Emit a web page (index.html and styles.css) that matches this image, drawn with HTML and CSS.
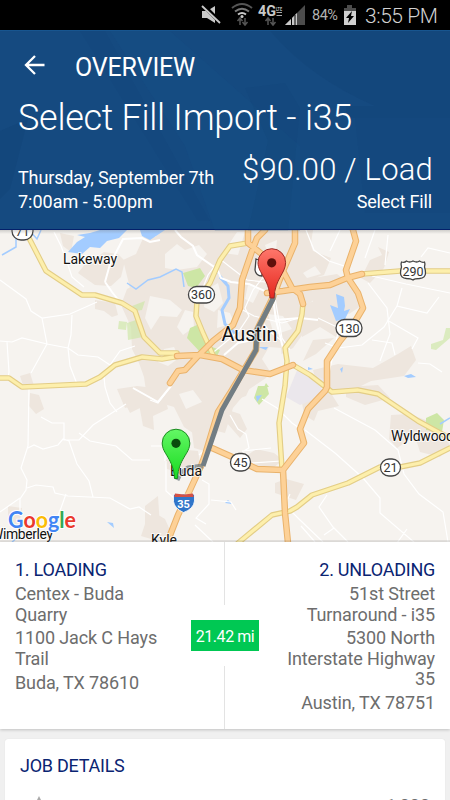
FILE: index.html
```html
<!DOCTYPE html>
<html lang="en">
<head>
<meta charset="utf-8">
<title>Overview</title>
<link rel="stylesheet" href="styles.css">
</head>
<body>
<div class="statusbar">
  <svg class="status-icons" width="112" height="30" viewBox="198 0 112 30">
    <path d="M202 11h5l8-5v17l-8-5h-5z" fill="#c9c9c9"/>
    <path d="M203 5l18 18" stroke="#000" stroke-width="4"/>
    <path d="M202 6l18 17" stroke="#c9c9c9" stroke-width="1.8"/>
    <g fill="none" stroke-width="2">
      <path d="M232 8q10-8 20 0" stroke="#555"/>
      <path d="M235 11.500q7-5.500 14 0" stroke="#777"/>
      <path d="M238 14.500q4-3 8 0" stroke="#c9c9c9"/>
    </g>
    <circle cx="242" cy="16.500" r="1.500" fill="#c9c9c9"/>
    <path d="M240 25v-6M237.500 21l2.500-3 2.500 3M245 18v6M242.500 22l2.500 3 2.500-3M268 25v-6M265.500 21l2.500-3 2.500 3M273 18v6M270.500 22l2.500 3 2.500-3" fill="none" stroke="#555" stroke-width="1.500"/>
    <text class="net" x="258" y="16" textLength="18" lengthAdjust="spacingAndGlyphs">4G</text>
    <text class="net-lte" x="276" y="10.500" textLength="6" lengthAdjust="spacingAndGlyphs">LTE</text>
    <path d="M276.500 12.500h5.500M276.500 15.500h5.500" stroke="#aaa"/>
    <path d="M285 25l20-20v20z" fill="#4c4c4c"/>
    <path d="M285 25l12-12v12z" fill="#c9c9c9"/>
    <path d="M291.500 18v7M295 15v10" stroke="#000"/>
  </svg>
  <span class="battery-pct">84%</span>
  <svg class="battery" width="14" height="22" viewBox="0 0 14 22">
    <path d="M4 1h5v3h4v5H1V4h3z" fill="#4c4c4c"/>
    <path d="M1 7h12v14H1z" fill="#d0d0d0"/>
    <path d="M9 7l-6 7h3l-1 5 6-7H8z" fill="#000"/>
  </svg>
  <span class="clock">3:55 PM</span>
</div>

<header class="hero">
  <svg class="hero-art" viewBox="0 30 450 200" width="450" height="200">
    <path d="M0 130l28-12-18 70-10 10z" fill="#0b3768" opacity=".15"/>
    <path d="M80 30h25l105 190h-12z" fill="#0b3768" opacity=".08"/>
    <path d="M110 30h60l130 115v85h-85l-30-85z" fill="#1b5792" opacity=".16"/>
    <path d="M270 30h180v75h-75q-65-28-105-75z" fill="#0b3768" opacity=".15"/>
    <path d="M346 105h104v12H346z" fill="#0b3768" opacity=".15"/>
    <path d="M355 117h95v95h-85z" fill="#0b3768" opacity=".07"/>
    <path d="M245 87l40-5 15 25-12 123h-40l20-90z" fill="#0b3768" opacity=".07"/>
  </svg>
  <div class="appbar">
    <svg class="back" width="22" height="20" viewBox="0 0 22 20"><path d="M20.500 10H2M11 1L2 10l9 9" fill="none" stroke="#fff" stroke-width="2.300"/></svg>
    <span class="appbar-title">OVERVIEW</span>
  </div>
  <h1 class="job-title">Select Fill Import - i35</h1>
  <div class="job-row">
    <div class="when"><div class="date">Thursday, September 7th</div><div class="time">7:00am - 5:00pm</div></div>
    <div class="pay"><div class="price">$90.00 / Load</div><div class="material">Select Fill</div></div>
  </div>
</header>

<section class="map">
<svg width="450" height="312" viewBox="0 230 450 312">
  <defs>
    <linearGradient id="redpin" x1="0" y1="0" x2="0" y2="1"><stop offset="0" stop-color="#ff776b"/><stop offset="1" stop-color="#e5281f"/></linearGradient>
    <linearGradient id="greenpin" x1="0" y1="0" x2="0" y2="1"><stop offset="0" stop-color="#63f765"/><stop offset="1" stop-color="#19db20"/></linearGradient>
    <linearGradient id="edge" x1="0" y1="0" x2="0" y2="1"><stop offset="0" stop-color="#777" stop-opacity=".3"/><stop offset="1" stop-color="#777" stop-opacity="0"/></linearGradient>
  </defs>
  <path d="M0 230h450v312H0z" fill="#f6f3ef"/>
  <g class="urban">
    <path d="M158 230h155l-3 20 17 7-12 13 2 27-14 12 2 22-12 17-15 8-12 22-18 12-15 18-8 25-16-4-10 8-15-10-10-20-20-6-24 12-6-12 8-8 14-2-2-14-5-14-7-14-1-22-10-22 6-16 15-8z"/>
    <path d="M78 273l8-10 10-5 8-6 14 2 7 7-4 16-10 9-16-1-10-7zM60 233l14 3-3 16-8-6zM123 260l13-6 9-20 15 4-2 18-12 20-2 30-12-10z"/>
    <path d="M95 300l20 3 3 12-6 2-8-6-9-2zM20 376l10-3 4 13-10 2zM30 393l9 2 5 14-8 5-7-8zM117 389l20-3 26 3 5 20-15 7 1 14-11-4-4-22-14 4z"/>
    <path d="M8 506l14 2-3 18-11-4zM145 506l13-10 3 46-20-6 4-12zM150 510l15 9 8 18-23-2zM165 461l13-12 20 2 2 12-13 12-20-6zM192 432l18-8 8 8-10 20-14-4z"/>
    <path d="M228 410l12 4 7 15-7 9-14-16zM244 458l12-9 18 4 9 7-15 12zM275 483l11-4 18 5-8 16-21-7zM298 378l26 4 15 24-21 5-4 10-10-6z"/>
    <path d="M313 370l25-6 35 4 25-14 13-8 5 14-12 16-33 5-22 11-31-2zM346 387l32-2 12 13-25 7-19-8zM391 415l18-1 25 9 16 22-10 12-20-5-5-16-18 12-8-9zM370 260l12-5-4-8 11 5-5 16-14 15-9-5z"/>
    <path d="M290 230l16 1 7 20 18 7-7 17-16 5-12 18-20-14zM302 305l25-8 13 8 14 30-18 2-16-10-18 10zM313 340l21-2-18 16-13 7zM313 278l24-4 8 6 12 12 4 14-12 8-14-6-22 8zM145 330l15-4 2 20-18 14zM210 360l50 6-14 30-22 8-30-8z"/>
  </g>
  <g fill="#f6f3ef">
    <path d="M165 254l12-10 8 6 14-5 8 9-10 13-20 3-12-2zM150 296l20 4 12 10-5 7-17-1-9 14-6-12zM185 310l8 2 1 15-11 8-6-8zM164 349l10-2 5 11-11 8-10-4zM206 290l12-7 5 20-9 9-10-5zM218 310l12 3 4 10-17 5zM237 232l8 0-7 23-15-2z"/>
    <path d="M265 245l12-5-1 10 7 8-12 5zM248 285l12 4-7 14-8-4zM268 314l15 2 9 13-18 6zM269 347l12 1 2 22-12 3-9-14zM179 394l14-4 9 12-16 7zM303 273l12-7 6 8-14 4z"/>
  </g>
  <path d="M298 368l28 12 2 14-28 11-14-8z" fill="#ebe7ec"/>
  <g fill="#cde6a5">
    <path d="M183 273l17-5 5 8-9 12-8-2zM190 328l7-3 10 20 13 5-3 6-17-4-13-14zM258 386h9l2 8-10 11-5-7zM426 418l11-5 7 7-2 12-16-2zM264 387l2-4 3 4z"/>
    <path d="M119 321l8 1-1 8-8-1zM127 323l9-3 7 17-15 3zM132 306l13-5-3 9-7 1zM431 344l12-4 3-12h4v10l-14 12-5-1z" opacity=".65"/>
  </g>
  <g fill="#a3ccff">
    <path d="M77 235l13-2 10-3h27l-8 8-12 3-7 7-10-1-8 7-14-2 9-10 8-5zM140 230h25l-15 10-8-4zM330 305l8 3-2-14 8 3 1 9-1 5 6-2-5 10-9 2zM340 369l3-2-1 6zM404 376l7-2 5 3-8 1zM308 367l5 2-5 1zM262 395l-5 7-1-6zM107 522l6 1 1 5zM225 503l3-3 4 4zM258 347h10l-2 3z"/>
  </g>
  <g fill="none" stroke="#a3ccff" stroke-width="1.500">
    <path d="M2 255l14-8v-17M29 230l8 9 4-9M127 283l9 6 12-9 12-3 16-8 6 3 2 15M218 273l9 10M450 418l-10 6M12 542l6-5"/>
    <path d="M220 277l8 9 1 12-7 12 3 14 11 10" stroke-width="3"/>
  </g>
  <g class="minor">
    <path d="M0 280l26 19 5 12 11 7 28-4 27-12M42 318l5 26-16 29M0 341l12 1 10-4 25 6 21 4 10 7 20 2 12 8M72 315l-1 20-3 13 2 18 7 18M7 342l2 30-1 6M110 365l10-14 15-5M54 232l7 14 7 19 4 12 12 10M104 377l1 10 5 16 7 9"/>
    <path d="M29 388l-1 58-7 22 6 12-1 10-6 9v15M28 448l6-3 9 4 15-4 5-6 6 2 8 23 12 17 4 16M41 417l11 6h12v17h15l14-15 33-21M79 433l11 8 26 5 16 14h18M27 488l9-3 17 2 2 6 13 3 42 2 20 11 9-2 12 8M66 494l-5 14-4 10M20 498l-20 14"/>
    <path d="M200 295l8-20 12-16 14 11 13 10 18 2M265 275l-12 15-8 18 4 8-10 15-18 15-11 9M275 298l7 40 8 12M239 308l15 8 28 7 17-5M275 300l-15 18 9 13 13 10M318 318l21 10-10 45-7 16M306 230l8 20 15 11 15 5 3 12M368 283l19 25 3 26-10 27M372 276l34 8 44 9M365 258l10-28M330 251l10-21M385 265l3-30M421 257l7-9 22 5M402 288l-5 18 30 7 12-16M397 306l-13 21-22 18-24 3-13-5M387 320l31 18-6 11M372 340l20 3 3 12M418 363l12 1 12 8"/>
    <path d="M334 408l41 22 23 20 6 24 15 20 24 18 5 30M305 430l30 23 28 25 17 20v15l35 30M290 494l-5 11 15 15 23 22M327 495l-8 12 14 20 15 15M324 535l10-7M407 529l-10 14M150 400l8 3 10-13M262 399l15 9 15 15 10 7M230 415l8 14 8 5 3 14-7 4M242 451l29-3M251 463l30-2M166 461v30l9 8M180 455l-6-8 1-18M199 455l13-12M202 480l7 4v20l-13 14 10 6M211 500l20 2 5 8M195 525l18 17M151 446h14v15M301 526l14 16"/>
  </g>
  <path class="major" d="M105 282l5-18 13-25 19-1 8 4 10-2M175 230l6 7 12 9 4 9 20 14 4 9 10 4 18 2 18 8M105 282l7 10 8 10M133 388l25 14 13-16M273 298l3 22 24-2 18 2M276 320l10 40M224 355l14-12 10-2"/>
  <g class="yellow-case"><path id="yellows" d="M29 232v6l17 33 36 24h13l27 8 13 8 9 26 16 16h17M0 378h9l13 9 64-3 14-7 15-12 27-8 20 2 18-3M248 243l-18 3-10 14-10 23-13 18-1 15 7 17 10 22M303 303l-1 11-4 17-13 17 2 13-2 25-6 37 3 46M293 365l17 10 13 10 9 7 26-2 20 4 40 27 22 12 10 5M450 448l-30 15-20 4h-20l-32 16-36 12-15 12-7 4-18 4-34 28M362 274l38-3h50"/></g>
  <use href="#yellows" class="yellow"/>
  <g class="orange-case"><path id="oranges" d="M248 230v13l15 12 20 16 9 17 8 6 3 10M265 230l-8 8-5 13-10 29-2 28-7 17-20 16-15 15-13 14-7 1-8 12M177 356l23-1 22 4 21 11 27 4 23-9M295 230v13l-12 28-10 26-16 33-1 20-24 40-14 22-13 43-4 11-11 24-12 25-11 28M267 293l16-2 27-4 20-2 17-7 15-4M353 230l3 11-10 29 2 8 10 15 5 15-10 17-13 16-13 20v26l-2 4-17 18-8 20 4 14-21 27 2 43 3 30M212 448l18 8 27 13 26 1"/></g>
  <use href="#oranges" class="orange"/>
  <path d="M273 293v6l-16 31-1 20-34 60-19 56" class="route"/>
  <path d="M203 466l-15 2-8 6-3 6" class="route" opacity=".75"/>

  <g class="shield">
    <rect x="12" y="222" width="21" height="18" rx="9"/>
    <rect x="188.500" y="286.500" width="26" height="16.500" rx="8"/>
    <rect x="336" y="319.500" width="26" height="17" rx="8.500"/>
    <rect x="230.500" y="453.500" width="20" height="17.500" rx="8.500"/>
    <rect x="380.500" y="459" width="20" height="17" rx="8.500"/>
    <path d="M401.500 262q3 1 5-1 3 2 6.500 0 4 2 6.500 0 3 2 5 1 1 2 0 5 1 3 1 6 0 5-6 5.500-5 0-6.500 1.500-2-1.500-6.500-1.500-6-.5-6-5.500 0-3 1-6-1-3 0-5z"/>
    <path d="M256 259q4 2 6 0v17q-6 0-7-6z"/>
  </g>
  <g class="shield-label">
    <text x="22.500" y="236">71</text><text x="201.500" y="299">360</text><text x="349" y="332.500">130</text>
    <text x="240.500" y="466.500">45</text><text x="390.500" y="472">21</text><text x="413" y="275.500">290</text>
  </g>
  <path d="M173.500 494l3 1 7-1 7 1 4-1v7q-1 8-11 11.500-9-4-10-11z" fill="#3075c9" stroke="#fff" stroke-width=".8"/>
  <path d="M175 493.500l9 1 9-1 .7 3.500h-19.500z" fill="#d35045"/>
  <text class="interstate" x="183.500" y="508">35</text>
  <g class="place">
    <text x="63" y="263.500" textLength="54">Lakeway</text>
    <text x="170" y="476" textLength="32">Buda</text>
    <text x="391" y="441" textLength="63">Wyldwood</text>
    <text x="151" y="544.500" textLength="26">Kyle</text>
    <text x="-9" y="539" textLength="62">Wimberley</text>
    <text class="city" x="221.500" y="341" textLength="56" lengthAdjust="spacingAndGlyphs">Austin</text>
  </g>
  <g stroke-width="1">
    <path d="M258 262.500a13.800 13.800 0 0 1 27.600 0c0 11-10.600 16-11.600 35.500h-4c-1-20-12-24.500-12-35.500z" fill="url(#redpin)" stroke="#9b2a24"/>
    <circle cx="271.700" cy="262.800" r="4.600" fill="#5f100c"/>
    <path d="M162.200 443a13.800 13.800 0 0 1 27.600 0c0 11-11.300 15.500-12.300 35.500h-3c-1-20-12.300-24.500-12.300-35.500z" fill="url(#greenpin)" stroke="#1b8a1f"/>
    <circle cx="176" cy="443.300" r="4.600" fill="#0a4d0d"/>
  </g>
  <text class="google" x="8" y="527.500" textLength="68" lengthAdjust="spacingAndGlyphs"><tspan fill="#4285f4">G</tspan><tspan fill="#ea3a2e">o</tspan><tspan fill="#fbbc05">o</tspan><tspan fill="#4285f4">g</tspan><tspan fill="#34a853">l</tspan><tspan fill="#ea3a2e">e</tspan></text>
  <path d="M0 230h450v4H0z" fill="url(#edge)"/>
  <path d="M0 540h450v2H0z" fill="#777" opacity=".15"/>
</svg>
</section>

<section class="stops">
  <div class="stop">
    <h2 class="heading">1. LOADING</h2>
    <p>Centex - Buda<br>Quarry</p>
    <p>1100 Jack C Hays<br>Trail</p>
    <p>Buda, TX 78610</p>
  </div>
  <div class="divider"><span class="line-top"></span><span class="line-bottom"></span></div>
  <div class="stop stop-right">
    <h2 class="heading">2. UNLOADING</h2>
    <p>51st Street<br>Turnaround - i35</p>
    <p>5300 North<br>Interstate Highway<br>35</p>
    <p>Austin, TX 78751</p>
  </div>
  <span class="distance">21.42 mi</span>
</section>

<section class="details">
  <h2 class="heading">JOB DETAILS</h2>
  <div class="detail-row">
    <svg width="12" height="12" viewBox="0 0 12 12"><path d="M6 0l4 8H2z" fill="#aaa"/></svg>
    <span class="amount">1,000</span>
  </div>
</section>
</body>
</html>
```

FILE: styles.css
```css
* { box-sizing: border-box; }
body { margin: 0; width: 450px; height: 800px; overflow: hidden; background: #f0f0f0; font-family: Roboto, "Liberation Sans", sans-serif; display: flex; flex-direction: column; }
h1, h2, p { margin: 0; font-weight: 400; }

.statusbar { height: 30px; flex: none; background: #000; color: #c6c6c6; display: flex; align-items: center; padding-left: 198px; white-space: nowrap; }
.status-icons { flex: none; }
.net { font-size: 15px; font-weight: 700; fill: #c9c9c9; }
.net-lte { font-size: 6px; font-weight: 700; fill: #bbb; }
.battery-pct { width: 29px; margin-left: 2px; margin-top: 1px; font-size: 14.5px; font-weight: 400; letter-spacing: -.5px; color: #b2b2b2; }
.battery { margin-left: 2px; margin-top: -1px; flex: none; }
.clock { margin-left: 8px; margin-top: 1px; font-size: 21px; font-weight: 300; letter-spacing: -.45px; color: #d2d2d2; }

.hero { position: relative; height: 200px; flex: none; background: #154a80; border-top: 1px solid #17558f; border-bottom: 1px solid #04206a; color: #fff; }
.hero-art { position: absolute; left: 0; top: 0; }
.appbar { position: relative; display: flex; align-items: center; height: 50px; padding: 18px 0 0 24px; }
.appbar-title { margin-left: 29px; margin-top: 5px; font-size: 25px; line-height: 30px; letter-spacing: -.15px; }
.back { margin-top: 0; }
.job-title { position: relative; margin: 14px 0 0 18px; height: 46px; line-height: 46px; font-size: 36px; font-weight: 300; letter-spacing: -.29px; white-space: nowrap; }
.job-row { position: relative; display: flex; justify-content: space-between; padding: 8px 18px 0; white-space: nowrap; }
.when { padding-top: 17px; font-size: 18px; line-height: 24px; }
.date { letter-spacing: -.13px; }
.time { letter-spacing: 0; }
.pay { text-align: right; }
.price { font-size: 31px; font-weight: 300; line-height: 41px; letter-spacing: .2px; margin-right: -1px; }
.material { font-size: 18px; line-height: 24px; letter-spacing: -.15px; }

.map { height: 312px; flex: none; }
.map svg { display: block; }
.urban { fill: #eee6de; }
.minor { fill: none; stroke: #fff; stroke-width: 1.2; }
.major { fill: none; stroke: #fff; stroke-width: 2; }
.yellow-case, .yellow, .orange-case, .orange { fill: none; stroke-linejoin: round; stroke-linecap: round; }
.yellow-case { stroke: #e3cd86; stroke-width: 5.5; }
.yellow { stroke: #fdefac; stroke-width: 3.3; }
.orange-case { stroke: #e9b26b; stroke-width: 6.5; }
.orange { stroke: #fdd197; stroke-width: 4.5; }
.route { fill: none; stroke: #727d83; stroke-width: 5; stroke-linejoin: round; }
.shield { fill: #fff; stroke: #444; stroke-width: 1.3; }
.shield-label { font-size: 12.5px; fill: #333; text-anchor: middle; }
.interstate { font-size: 11px; font-weight: 700; fill: #fff; text-anchor: middle; }
.place { font-size: 14px; fill: #111; stroke: #fff; stroke-opacity: .75; stroke-width: 2px; paint-order: stroke; }
.place .city { font-size: 21px; }
.google { font-family: Lato, sans-serif; font-size: 23.5px; font-weight: 700; stroke: #fff; stroke-width: 2px; paint-order: stroke; }

.stops { position: relative; height: 187px; flex: none; display: flex; background: #fff; box-shadow: 0 1px 3px rgba(0,0,0,.2); color: #6d6d6d; }
.stop { width: 224px; padding: 17px 15px 0; }
.heading { font-size: 18px; line-height: 22px; letter-spacing: -.25px; color: #0a2472; white-space: nowrap; }
.stop p { font-size: 18px; line-height: 20.5px; margin-bottom: 3.3px; letter-spacing: -.13px; white-space: nowrap; }
.stop .heading { margin-bottom: 3px; }
.stop-right { width: 225px; text-align: right; }
.divider { width: 1px; display: flex; flex-direction: column; justify-content: space-between; }
.line-top, .line-bottom { height: 63px; background: #e3e3e3; }
.distance { position: absolute; left: 191px; top: 78px; width: 68px; height: 31px; line-height: 33px; text-align: center; background: #00c853; color: #fff; font-size: 16px; letter-spacing: -.45px; }

.details { flex: none; margin: 10px 5px 0; height: 80px; padding: 16px 15px 0; background: #fff; border-radius: 3px; box-shadow: 0 0 1px rgba(0,0,0,.12); }
.detail-row { display: flex; justify-content: space-between; padding: 19px 0 0 13px; }
.amount { color: #6d6d6d; font-size: 18px; line-height: 20px; }
```
